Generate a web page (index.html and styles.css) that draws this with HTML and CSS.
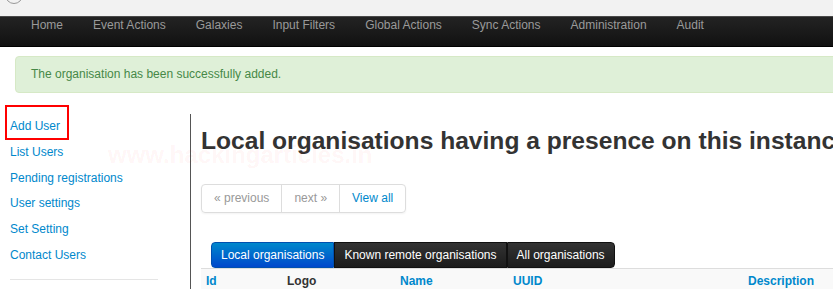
FILE: index.html
```html
<!DOCTYPE html>
<html>
<head>
<meta charset="utf-8">
<link rel="stylesheet" href="styles.css">
</head>
<body>
<div class="topstrip"><span class="circle"></span></div>
<div class="navbar">
  <ul class="nav">
    <li>Home</li>
    <li>Event Actions</li>
    <li>Galaxies</li>
    <li>Input Filters</li>
    <li>Global Actions</li>
    <li>Sync Actions</li>
    <li>Administration</li>
    <li>Audit</li>
  </ul>
</div>
<div class="alert">The organisation has been successfully added.</div>
<div class="layout">
  <div class="sidebar">
    <ul class="sidelinks">
      <li class="active"><a>Add User</a></li>
      <li><a>List Users</a></li>
      <li><a>Pending registrations</a></li>
      <li><a>User settings</a></li>
      <li><a>Set Setting</a></li>
      <li><a>Contact Users</a></li>
    </ul>
    <div class="divider"></div>
  </div>
  <div class="main">
    <h2 class="title">Local organisations having a presence on this instance</h2>
    <div class="pagination">
      <span class="pg disabled">« previous</span>
      <span class="pg disabled">next »</span>
      <span class="pg link">View all</span>
    </div>
    <div class="tabs">
      <span class="tab active">Local organisations</span>
      <span class="tab">Known remote organisations</span>
      <span class="tab">All organisations</span>
    </div>
    <div class="thead">
      <span class="th c-id">Id</span>
      <span class="th c-logo plain">Logo</span>
      <span class="th c-name">Name</span>
      <span class="th c-uuid">UUID</span>
      <span class="th c-desc">Description</span>
    </div>
  </div>
</div>
<div class="watermark">www.hackingarticles.in</div>
</body>
</html>
```
FILE: styles.css
```css
html, body {
  margin: 0;
  padding: 0;
  background: #fff;
  font-family: "Liberation Sans", Arial, sans-serif;
  font-size: 12px;
  color: #333;
  overflow: hidden;
}
.topstrip {
  height: 16px;
  background: #f2f2f2;
  border-bottom: 1px solid #4a4a4a;
  position: relative;
  overflow: hidden;
}
.circle {
  position: absolute;
  left: 5px;
  top: -14px;
  width: 16px;
  height: 16px;
  border: 1px solid #999;
  border-radius: 50%;
}
.navbar {
  height: 30px;
  background: linear-gradient(#232323, #111);
  border-bottom: 1px solid #000;
  box-sizing: border-box;
}
.nav {
  list-style: none;
  margin: 0;
  padding: 0 0 0 16px;
  display: flex;
}
.nav li {
  color: #9a9a9a;
  padding: 0 15px;
  line-height: 16px;
  font-size: 12px;
}
.alert {
  margin: 9px -20px 0 15px;
  height: 37px;
  box-sizing: border-box;
  background: #dff0d8;
  border: 1px solid #d6e9c6;
  border-radius: 4px;
  color: #468847;
  padding: 9px 15px;
  line-height: 16px;
}
.layout {
  display: flex;
  margin-top: 12px;
}
.sidebar {
  width: 148px;
  margin-left: 10px;
  flex-shrink: 0;
}
.sidelinks {
  list-style: none;
  margin: 0;
  padding: 9px 0 0 0;
}
.sidelinks li {
  line-height: 25.8px;
}
.sidelinks a {
  color: #0088cc;
  display: inline-block;
  position: relative;
}
.sidelinks li.active a::after {
  content: "";
  position: absolute;
  left: -5px;
  top: -9px;
  width: 60px;
  height: 31px;
  border: 2px solid #ff0000;
}
.divider {
  margin-top: 10px;
  border-top: 1px solid #e5e5e5;
}
.main {
  margin-left: 32px;
  margin-top: 9px;
  border-left: 1px solid #555;
  padding-left: 10px;
  flex: 1;
  min-width: 0;
  white-space: nowrap;
}
.title {
  margin: 12px 0 0 0;
  font-size: 24.6px;
  line-height: 30px;
  font-weight: bold;
  color: #333;
}
.pagination {
  margin-top: 28px;
  display: inline-flex;
  border: 1px solid #ddd;
  border-radius: 4px;
  box-shadow: 0 1px 2px rgba(0,0,0,0.05);
  height: 29px;
  box-sizing: border-box;
}
.pg {
  line-height: 27px;
  padding: 0 12px;
  border-left: 1px solid #ddd;
}
.pg:first-child { border-left: none; }
.pg.disabled { color: #999; }
.pg.link { color: #0088cc; }
.tabs {
  margin: 29px 0 0 10px;
  display: flex;
}
.tab {
  height: 26px;
  line-height: 24px;
  padding: 0 9px;
  color: #fff;
  background: linear-gradient(#333, #1c1c1c);
  border: 1px solid #111;
  box-sizing: border-box;
}
.tab:first-child { border-radius: 4px 0 0 4px; }
.tab:last-child { border-radius: 0 4px 4px 0; }
.tab.active {
  background: linear-gradient(#0088cc, #0048cc);
  border-color: #0050b0;
}
.thead {
  display: flex;
  border-top: 1px solid #ddd;
  background: #f9f9f9;
  height: 30px;
  margin-right: -40px;
}
.th {
  font-weight: bold;
  font-size: 12px;
  color: #0088cc;
  padding: 5px 5px;
  line-height: 14px;
  box-sizing: border-box;
}
.th.plain { color: #333; }
.c-id { width: 81px; }
.c-logo { width: 113px; }
.c-name { width: 113px; }
.c-uuid { width: 235px; }
.c-desc { width: 100px; }
.watermark {
  position: absolute;
  left: 108px;
  top: 141px;
  font-size: 24px;
  font-weight: bold;
  color: rgba(255, 0, 0, 0.05);
  pointer-events: none;
}
```
